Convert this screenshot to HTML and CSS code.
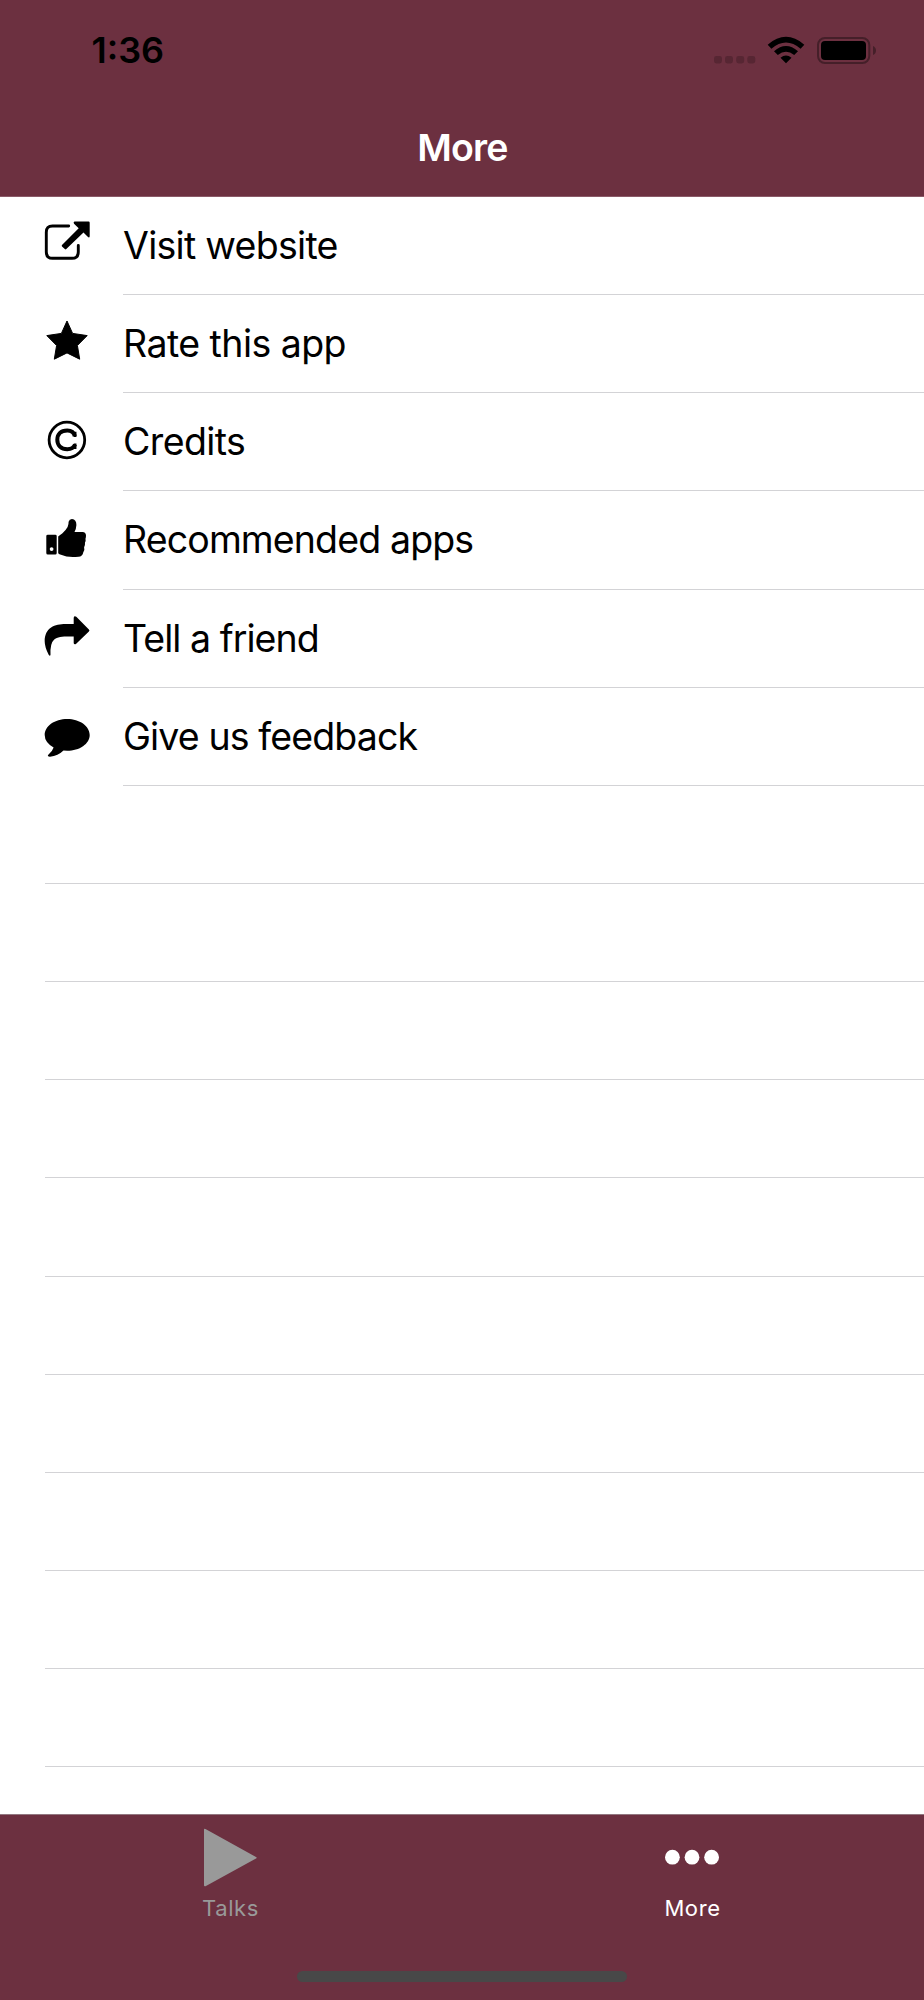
FILE: index.html
```html
<!DOCTYPE html>
<html lang="en">
<head>
<meta charset="utf-8">
<title>More</title>
<link rel="stylesheet" href="styles.css">
</head>
<body>
<div class="screen">
  <header class="header">
    <div class="status">
      <span class="time">1:36</span>
      <svg class="indicators" width="170" height="40" viewBox="710 30 170 40">
        <g fill="#572633"><rect x="714" y="56" width="8" height="7.4" rx="2.4"/><rect x="725" y="56" width="8" height="7.4" rx="2.4"/><rect x="736.2" y="56" width="8" height="7.4" rx="2.4"/><rect x="747.3" y="56" width="8" height="7.4" rx="2.4"/></g>
        <path d="M767.7 44.7Q786 29 804.3 44.7L800.6 48.7Q786 36.500 771.400 48.700ZM774 51.200Q786 40.800 798 51.200L794.200 55Q786 48.300 777.800 55ZM780.500 57.700Q786 53.300 791.500 57.700L786 63.300Z"/>
        <rect x="818" y="38" width="51.300" height="25" rx="7" fill="none" stroke="#451f29" stroke-width="2"/>
        <rect x="821" y="41" width="45" height="19" rx="4"/>
        <path d="M873 46Q876 47.500 876 50.500T873 55Z" fill="#451f29"/>
      </svg>
    </div>
    <h1 class="title">More</h1>
  </header>
  <main class="list">
    <div class="row"><svg class="icon" viewBox="0 .5 46 98.200"><path d="M24.700 29.500H8.500Q2.300 29.500 2.300 35.700V55.600Q2.300 61.800 8.500 61.800H28.100Q34.300 61.800 34.300 55.600V49" fill="none" stroke="#000" stroke-width="2.900" stroke-linecap="round"/><path d="M30.500 25H44.600Q45.700 25 45.700 26.200V39.700Q45.500 41.600 44 40.600L39.500 36.100L22.300 52.600Q21.500 53.200 20.800 52.600L18 49.900Q17.400 49.200 18 48.500L34.700 31.700L30 27.200Q29 25.600 30.500 25Z"/></svg><span class="label visit">Visit website</span></div>
    <div class="row"><svg class="icon" viewBox="0 .8 46 98.200"><path d="M23 26.800L28.600 39.200L43.200 41.400L33.400 51.300L35.700 65L23 58.700L10.300 65L12.600 51.300L2.800 41.400L17.400 39.200Z" stroke="#000" stroke-width="1" stroke-linejoin="round"/></svg><span class="label rate">Rate this app</span></div>
    <div class="row"><svg class="icon" viewBox="0 .5 46 98.200" fill="none" stroke="#000"><circle cx="22.900" cy="47.500" r="17.800" stroke-width="2.800"/><path d="M30.800 43.700Q29.500 38 23.300 38C16.500 38 13.300 42 13.300 47.300S17 56.700 23.300 56.700Q29 56.700 31.100 52" stroke-width="4"/><path d="M31.200 39.200V44.500M31.200 51V56.500" stroke-width="2.500"/></svg><span class="label credits">Credits</span></div>
    <div class="row"><svg class="icon" viewBox="0 .5 46 98.200"><path fill-rule="evenodd" d="M3.800 44.200H11.300Q12.700 44.200 12.700 45.600V62.400Q12.700 63.900 11.300 63.900H3.800Q2.300 63.900 2.300 62.400V45.600Q2.300 44.200 3.800 44.200ZM7.600 56.700A1.900 1.900 0 1 0 7.600 60.500A1.900 1.900 0 1 0 7.600 56.700Z"/><path d="M14.200 46Q16 44.300 18.200 43Q21.700 40 23.600 36.500Q24.700 34 24.600 31.200Q25.300 28.500 28 28.500Q32.400 29 32.400 34.500Q32.200 38.500 30.500 41.400H38.500Q42 41.700 42 45Q42 47 41.500 48.300Q42 50.500 41 52Q41.300 54.500 40.100 56.700Q41 59.500 39.300 61.800Q38.500 66.200 34.500 66.200Q24 67.500 17 64.200Q14.200 63.500 14.200 62.500Z"/></svg><span class="label recommended">Recommended apps</span></div>
    <div class="row"><svg class="icon" viewBox="0 .8 46 98.200"><path d="M29.700 28.500Q30.200 26.300 32.300 27.600L44.900 40.200Q46 41.300 44.900 42.400L32.200 54.600Q30.300 55.900 29.700 54V47.300C20 47.200 14 47.100 10 50.500Q6 54 6.500 65.500Q6.200 67.500 4.800 65.800Q.7 58 .7 52.300C.7 38 11 34.700 21.500 34.700H29.700Z"/></svg><span class="label tell">Tell a friend</span></div>
    <div class="row"><svg class="icon" viewBox="0 .8 46 98.200"><path d="M23.200 31.800C35.500 31.800 45.700 38.800 45.700 47.700S35.500 63.500 23.200 63.500L19.500 63.200Q14 68.600 6 69.500Q2.800 69.200 4.300 67.600Q8.300 64.500 9.600 60.300Q.7 55 .7 47.700C.7 38.800 10.800 31.800 23.200 31.800Z"/></svg><span class="label give">Give us feedback</span></div>
    <div class="blank"></div><div class="blank"></div><div class="blank"></div><div class="blank"></div><div class="blank"></div>
    <div class="blank"></div><div class="blank"></div><div class="blank"></div><div class="blank"></div><div class="blank"></div>
  </main>
  <nav class="tabs">
    <div class="tab muted"><svg class="tabicon" width="60" height="70" viewBox="0 0 60 70"><path d="M3 14.800Q3 13 4.500 14L55 42Q56.300 42.700 55 43.600L4.500 71.200Q3 71.700 3 70.200Z"/></svg><span class="tabname talks">Talks</span></div>
    <div class="tab"><svg class="tabicon" width="60" height="70" viewBox="0 0 60 70"><circle cx="9.400" cy="42.200" r="7.400"/><circle cx="29" cy="42.200" r="7.400"/><circle cx="48.600" cy="42.200" r="7.400"/></svg><span class="tabname more">More</span></div>
    <div class="home"></div>
  </nav>
</div>
</body>
</html>
```
FILE: styles.css
```css
* { box-sizing: border-box; }
body { margin: 0; background: #fff; color: #000; font-family: Inter, "Liberation Sans", sans-serif; }
.screen { width: 924px; height: 2000px; display: flex; flex-direction: column; overflow: hidden; }
.header { height: 197px; flex: none; background: #6c3040; border-bottom: 1px solid #8a5a68; }
.status { height: 100px; display: flex; justify-content: space-between; padding: 30px 44px 0 91.500px; }
.time { font-size: 36px; font-weight: 600; line-height: 41px; letter-spacing: 0; }
.title { margin: 0; padding-left: 1px; height: 96px; line-height: 96px; font-size: 37.500px; font-weight: 600; text-align: center; color: #fff; letter-spacing: -.8px; }
.list { flex: 1; min-height: 0; overflow: hidden; }
.row { height: 98.150px; padding-left: 44px; display: flex; }
.icon { width: 46px; height: 98.200px; flex: none; }
.label { margin-left: 33px; flex: 1; border-bottom: 1px solid #d3d3d6; font-size: 37.500px; line-height: 98px; white-space: nowrap; }
.visit { letter-spacing: -.72px; }
.rate { letter-spacing: -.55px; }
.credits { letter-spacing: -.6px; }
.recommended, .give { letter-spacing: -.87px; }
.tell { letter-spacing: -.95px; }
.blank { height: 98.150px; margin-left: 45px; border-bottom: 1px solid #d3d3d6; }
.tabs { height: 186px; flex: none; background: #6c3040; border-top: 1px solid #927780; display: grid; grid-template-columns: 1fr 1fr; grid-template-rows: 156px 29px; }
.tab { display: flex; flex-direction: column; align-items: center; color: #fff; fill: #fff; }
.muted { color: #999; fill: #999; }
.tabicon { overflow: visible; }
.tabname { margin-top: 10px; padding-right: 1px; font-size: 22px; line-height: 27px; font-weight: 400; letter-spacing: .6px; }
.home { grid-column: 1 / 3; justify-self: center; width: 330px; height: 11px; border-radius: 6px; background: #484848; }
```
